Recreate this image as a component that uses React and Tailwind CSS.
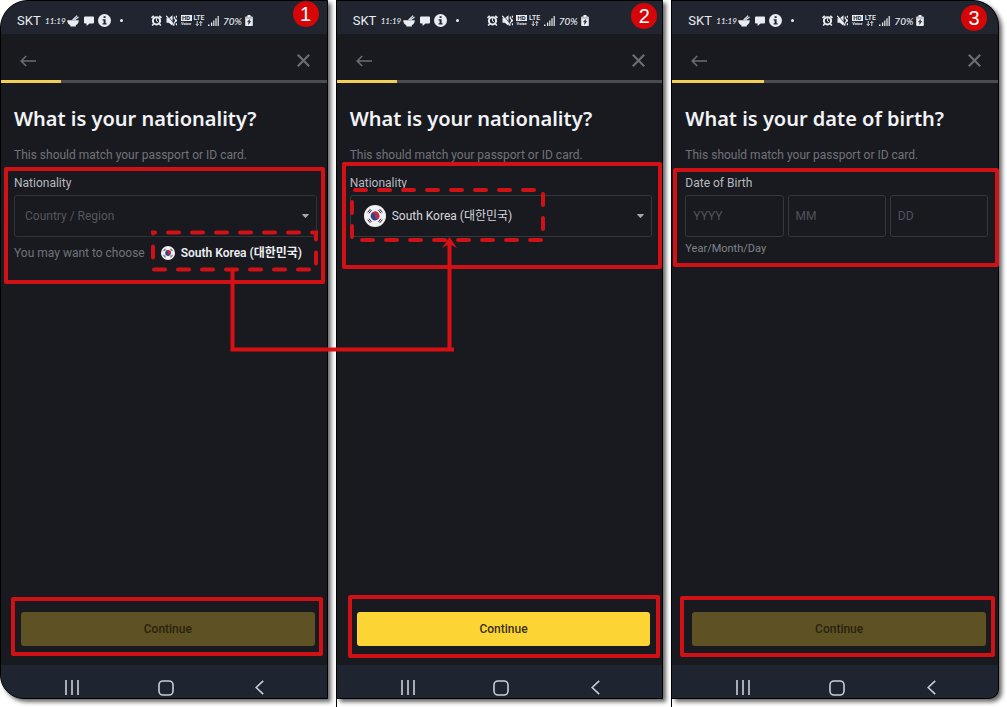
import React from 'react';

const STEPS = [
  { id: 1, title: 'What is your nationality?', progress: '18.5%' },
  { id: 2, title: 'What is your nationality?', progress: '18.5%', ready: true },
  { id: 3, title: 'What is your date of birth?', progress: '28%' }
];

const COLUMN_STYLES = {
  1: 'z-10',
  2: 'border-l border-black',
  3: 'border-l border-black'
};

const PANEL_STYLES = {
  1: 'border rounded-tl-[28px] rounded-bl-[24px]',
  2: 'border-y border-r',
  3: 'border-y border-r rounded-tr-[26px] rounded-br-[10px]'
};

const STATUS_STYLES = {
  1: 'rounded-tl-[27px]',
  2: '',
  3: 'rounded-tr-[25px]'
};

const NAV_STYLES = {
  1: 'rounded-bl-[23px]',
  2: '',
  3: 'rounded-br-[9px]'
};

const BADGE_STYLES = {
  1: 'top-0 right-[8px]',
  2: 'top-[2px] right-[5px]',
  3: 'top-[4px] right-[11px]'
};

const FIELD_FRAMES = {
  1: '-top-2 -bottom-[23px] -left-[10px] -right-2',
  2: '-top-[13px] -bottom-8 -left-2 -right-[10px]',
  3: '-top-[7px] -bottom-[10px] -left-3 -right-[11px]'
};

const BUTTON_FRAMES = {
  1: '-top-[15px] -bottom-[10px] -left-[10px] -right-2',
  2: '-top-[17px] -bottom-3 -left-[9px] -right-[10px]',
  3: '-top-4 -bottom-[11px] -left-3 -right-[9px]'
};

function Frame({ className }) {
  return (
    <div
      className={`pointer-events-none absolute rounded-xs border-4 border-[#d01116] ${className}`}
    />
  );
}

function Flag({ className }) {
  return (
    <svg className={className} viewBox="0 0 22 22" aria-hidden="true">
      <circle cx="11" cy="11" r="11" fill="#f1f1f4" />
      <g transform="rotate(20 11 11)">
        <circle cx="11" cy="11" r="4.4" fill="#2b4790" />
        <path d="M6.6 11a4.4 4.4 0 0 1 8.8 0a2.2 2.2 0 0 1-4.4 0a2.2 2.2 0 0 0-4.4 0z" fill="#c8283c" />
      </g>
      <g stroke="#25262b" strokeWidth="1">
        <path d="M3.7 7.300l2.700-3.200M4.900 8.300l2.700-3.200" />
        <path d="M18.300 7.300l-2.700-3.200M17.100 8.300l-2.700-3.200" />
        <path d="M3.700 14.700l2.700 3.200M4.900 13.700l2.700 3.200" />
        <path d="M18.300 14.700l-2.700 3.200M17.100 13.700l-2.700 3.200" />
      </g>
    </svg>
  );
}

function Caret() {
  return (
    <svg
      className="pointer-events-none absolute right-2 top-1/2 h-1 w-[7px] -translate-y-1/2"
      viewBox="0 0 7 4"
      aria-hidden="true"
    >
      <path d="M0.6 0h5.8a0.4 0.4 0 0 1 0.3 0.7L3.9 3.8a0.5 0.5 0 0 1-0.8 0L0.3 0.7A0.4 0.4 0 0 1 0.6 0z" fill="#a3a6ad" />
    </svg>
  );
}

function StatusBar({ step }) {
  return (
    <div
      className={`flex h-[33px] items-center bg-[#20252f] pl-4 pt-[6px] text-[#e9ecf2] ${STATUS_STYLES[step]}`}
    >
      <span className="w-[28px] text-[13px] leading-4">SKT</span>
      <span className="w-[22px] font-['Lato'] text-[8px] font-medium italic leading-4">11:19</span>
      <svg className="h-3 w-3" viewBox="0 0 12 12" fill="currentColor" aria-hidden="true">
        <path d="M0.2 5.2h11.600c0 2.600-1.400 4.200-3 5v1.300H3.400v-1.300C1.600 9.400 0.200 7.800 0.200 5.200z" />
        <path d="M5.600 5L10.200 0.700M7.400 5l4.200-3" stroke="currentColor" strokeWidth="1.100" />
      </svg>
      <svg className="ml-[5px] h-[10px] w-[10px]" viewBox="0 0 10 10" fill="currentColor" aria-hidden="true">
        <path d="M1 0.500h8a1 1 0 0 1 1 1v5a1 1 0 0 1-1 1H5.500L2.600 10V7.500H1a1 1 0 0 1-1-1v-5a1 1 0 0 1 1-1z" />
      </svg>
      <svg className="ml-1 h-[13px] w-[13px]" viewBox="0 0 13 13" aria-hidden="true">
        <circle cx="6.500" cy="6.500" r="6.500" fill="currentColor" />
        <path d="M5.600 2.300h2v1.800h-2zM4.600 5.200h3v4h1v1.300h-4V9.200h1V6.500h-1z" fill="#20252f" />
      </svg>
      <span className="ml-[9px] h-[3px] w-[3px] rounded-full bg-current" />

      <svg className="ml-[28px] h-[11px] w-[11px]" viewBox="0 0 11 11" fill="none" stroke="currentColor" aria-hidden="true">
        <circle cx="5.500" cy="5.800" r="3.600" strokeWidth="2" />
        <path d="M5.500 3.500v2.500l1.500 0.900" strokeWidth="1" />
        <path d="M0.500 2.800L2.800 0.800M10.500 2.800L8.200 0.800M2.500 9l-1.300 1.500M8.500 9l1.300 1.500" strokeWidth="1.600" />
      </svg>
      <svg className="ml-1 h-[11px] w-[11px]" viewBox="0 0 11 11" aria-hidden="true">
        <path d="M0.500 3.200h2.200L6.500 0.300v10.400L2.700 7.800H0.500z" fill="currentColor" />
        <path d="M8.300 1.500v2l1.200 1v2l-1.200 1v2M10.400 0.800v2M10.400 4.500v2M10.400 8.200v2" fill="none" stroke="currentColor" strokeWidth="1.200" />
        <path d="M1.500 0.500l8 10" stroke="#20252f" strokeWidth="0.800" />
        <path d="M0.300 0.800l8 9.700" stroke="currentColor" strokeWidth="1.200" />
      </svg>
      <span className="ml-[3px] flex w-3 flex-col items-center font-['Roboto']">
        <span className="w-[11px] bg-current text-center">
          <span className="block text-[6px] font-bold leading-[6px] text-[#20252f]">HD</span>
        </span>
        <span className="text-[4px] font-bold leading-[5px]">Voice</span>
      </span>
      <span className="ml-px flex w-3 flex-col items-center">
        <span className="text-[7px] font-medium leading-[6px]">LTE</span>
        <svg className="h-[5px] w-2" viewBox="0 0 8 5" fill="none" stroke="currentColor" strokeWidth="0.900" aria-hidden="true">
          <path d="M2.200 0v4.400M0.700 3l1.500 1.600L3.700 3M5.800 5V0.600M4.300 2l1.500-1.600L7.300 2" />
        </svg>
      </span>
      <svg className="ml-[3px] h-[10px] w-[11px]" viewBox="0 0 11 10" fill="currentColor" aria-hidden="true">
        <path d="M0 8.500h1.500V10H0zM3 6.500h1.200V10H3zM5.200 4.500h1.200V10H5.200zM7.400 2.200h1.200V10H7.400zM9.600 0h1.200v10H9.600z" />
      </svg>
      <span className="ml-1 w-[22px] font-['Lato'] text-[10px] font-medium italic leading-4">70%</span>
      <svg className="h-[11px] w-2" viewBox="0 0 8 11" aria-hidden="true">
        <path d="M2.500 0h3v1.500H7a0.800 0.800 0 0 1 0.800 0.800v7.900a0.800 0.800 0 0 1-0.800 0.800H1a0.800 0.800 0 0 1-0.800-0.800V2.300A0.800 0.800 0 0 1 1 1.500h1.500z" fill="currentColor" />
        <path d="M1 3h6M4.700 4.500L2.300 6.800h1.500L3.500 9.500L5.800 6.300H4.300z" fill="#20252f" stroke="#20252f" strokeWidth="0.400" />
      </svg>
    </div>
  );
}

function TopBar({ progress }) {
  return (
    <>
      <div className="flex h-[45px] items-center justify-between pl-[19px] pr-[17px] pt-2 text-[#6a6d74]">
        <button type="button" aria-label="Back">
          <svg className="h-3 w-4" viewBox="0 0 16 12" fill="none" stroke="currentColor" strokeWidth="1.600" aria-hidden="true">
            <path d="M16 6H1.200M6.200 1L1.200 6l5 5" />
          </svg>
        </button>
        <button type="button" aria-label="Close">
          <svg className="h-[13px] w-[13px]" viewBox="0 0 13 13" fill="none" stroke="currentColor" strokeWidth="2.200" aria-hidden="true">
            <path d="M0.800 0.800l11.400 11.400M12.200 0.800L0.800 12.200" />
          </svg>
        </button>
      </div>
      <div className="mt-px h-[3px] bg-[#4b4b50]">
        <div className="h-full bg-[#efcf55]" style={{ width: progress }} />
      </div>
    </>
  );
}

function NavBar({ step }) {
  return (
    <div
      className={`mt-[19px] grid h-[33px] grid-cols-3 items-center justify-items-center bg-[#1f2530] pl-6 pr-5 pt-3 text-[#c9cdd8] ${NAV_STYLES[step]}`}
    >
      <button type="button" aria-label="Recent apps">
        <svg className="h-[15px] w-[14px]" viewBox="0 0 14 15" stroke="currentColor" strokeWidth="1.600" aria-hidden="true">
          <path d="M1 0v15M7 0v15M13 0v15" />
        </svg>
      </button>
      <button type="button" aria-label="Home">
        <svg className="h-4 w-4" viewBox="0 0 16 16" fill="none" stroke="currentColor" strokeWidth="1.600" aria-hidden="true">
          <rect x="1" y="1" width="14" height="14" rx="4" />
        </svg>
      </button>
      <button type="button" aria-label="Go back">
        <svg className="h-[15px] w-[9px]" viewBox="0 0 9 15" fill="none" stroke="currentColor" strokeWidth="1.600" aria-hidden="true">
          <path d="M8.200 0.800L1.200 7.500l7 6.700" />
        </svg>
      </button>
    </div>
  );
}

function CountryField() {
  return (
    <>
      <label htmlFor="country" className="block text-xs leading-4 text-[#b6b9c0]">
        Nationality
      </label>
      <div className="relative mt-1">
        <select
          id="country"
          defaultValue=""
          className="block h-[42px] w-full appearance-none rounded-[3px] border border-[#2d323b] bg-transparent px-[10px] text-xs text-[#54575d]"
        >
          <option value="">Country / Region</option>
          <option value="kr">South Korea (대한민국)</option>
        </select>
        <Caret />
      </div>
      <div className="mt-2 flex h-4 items-center">
        <span className="whitespace-nowrap text-xs leading-4 text-[#70737a]">You may want to choose</span>
        <button
          type="button"
          className="relative ml-auto flex w-[166px] items-center gap-[6px] whitespace-nowrap pl-[10px] text-xs font-semibold leading-4 text-[#eceef2]"
        >
          <Flag className="h-[14px] w-[14px] shrink-0" />
          South Korea (대한민국)
          {/* Dashed outline and the arrow leading to the selected country */}
          <svg
            className="pointer-events-none absolute -top-4 left-0 h-[124px] w-[312px] overflow-visible"
            fill="none"
            stroke="#d01116"
            strokeWidth="4"
            aria-hidden="true"
          >
            <rect x="2" y="3.500" width="163" height="37" strokeDasharray="11 13" strokeDashoffset="9" strokeLinecap="round" />
            <path d="M81.500 41v79.500H303M298.500 120V14" stroke="#da0f13" />
            <path d="M298.500 8l7.500 11l-7.500-4l-7.500 4z" fill="#da0f13" stroke="none" />
          </svg>
        </button>
      </div>
    </>
  );
}

function SelectedCountryField() {
  return (
    <>
      <label htmlFor="selected-country" className="block text-xs leading-4 text-[#b6b9c0]">
        Nationality
      </label>
      <div className="relative mt-1">
        <select
          id="selected-country"
          defaultValue="kr"
          className="block h-[42px] w-full appearance-none rounded-[3px] border border-[#35373c] bg-transparent pl-[41px] pr-6 text-xs text-[#d5d7dc]"
        >
          <option value="kr">South Korea (대한민국)</option>
        </select>
        <Flag className="pointer-events-none absolute left-[14px] top-[10px] h-[22px] w-[22px]" />
        <Caret />
        <svg
          className="pointer-events-none absolute -top-2 left-0 h-[56px] w-[196px] overflow-visible"
          fill="none"
          stroke="#d01116"
          strokeWidth="4"
          aria-hidden="true"
        >
          <rect x="2" y="3" width="191" height="50" strokeDasharray="11 13" strokeDashoffset="-3" strokeLinecap="round" />
        </svg>
      </div>
    </>
  );
}

function BirthDateField() {
  return (
    <fieldset>
      <legend className="block text-xs leading-4 text-[#b6b9c0]">Date of Birth</legend>
      <div className="mt-1 grid grid-cols-3 gap-1">
        {[
          ['Year', 'YYYY'],
          ['Month', 'MM'],
          ['Day', 'DD']
        ].map(([label, placeholder]) => (
          <input
            key={label}
            aria-label={label}
            placeholder={placeholder}
            inputMode="numeric"
            className="h-[42px] w-full min-w-0 rounded-[3px] border border-[#35373c] bg-transparent px-[7px] text-xs text-[#d5d7dc] placeholder:text-[#505359]"
          />
        ))}
      </div>
      <p className="mt-1 text-[11px] leading-4 text-[#80838a]">Year/Month/Day</p>
    </fieldset>
  );
}

const FIELDS = {
  1: CountryField,
  2: SelectedCountryField,
  3: BirthDateField
};

function Phone({ step }) {
  const Field = FIELDS[step.id];

  return (
    <section className={`relative flex pb-2 pr-2 ${COLUMN_STYLES[step.id]}`}>
      <div
        className={`relative flex min-w-0 flex-1 flex-col border-black bg-[#191a1f] shadow-[3px_3px_4px_rgba(0,0,0,0.6)] ${PANEL_STYLES[step.id]}`}
      >
        <StatusBar step={step.id} />
        <TopBar progress={step.progress} />

        <div className="pl-[13px] pr-[10px]">
          <h1 className="mt-5 whitespace-nowrap font-['Noto_Sans'] text-xl font-semibold leading-8 text-[#f2f3f6]">
            {step.title}
          </h1>
          <p className="mt-3 text-xs leading-4 text-[#70737a]">This should match your passport or ID card.</p>
          <div className="relative mt-3">
            <Field />
            <Frame className={FIELD_FRAMES[step.id]} />
          </div>
        </div>

        <div className="relative ml-5 mr-3 mt-auto">
          <button
            type="button"
            disabled={!step.ready}
            className={`block h-[34px] w-full rounded-[3px] text-xs font-medium ${
              step.ready ? 'bg-[#fcd535] text-[#3a3013]' : 'bg-[#5e5124] text-[#29230f]'
            }`}
          >
            Continue
          </button>
          <Frame className={BUTTON_FRAMES[step.id]} />
        </div>

        <NavBar step={step.id} />

        <span
          className={`absolute flex h-[26px] w-[26px] items-center justify-center rounded-full bg-[#d60507] font-['Liberation_Sans'] text-xl leading-none text-white ${BADGE_STYLES[step.id]}`}
        >
          {step.id}
        </span>
      </div>
    </section>
  );
}

export default function App() {
  return (
    <main className="grid min-h-screen grid-cols-3 bg-white font-['Roboto','Noto_Sans_CJK_KR',sans-serif]">
      {STEPS.map((step) => (
        <Phone key={step.id} step={step} />
      ))}
    </main>
  );
}
